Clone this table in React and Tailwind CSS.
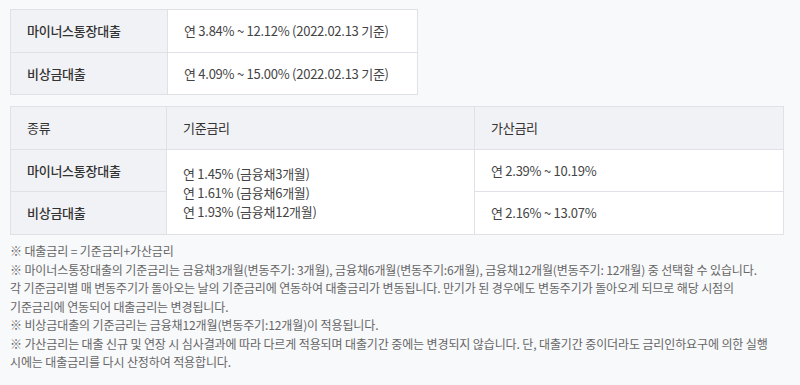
import React from "react";

const font = { fontFamily: '"Noto Sans CJK KR", "Noto Sans", sans-serif' };

export default function App() {
  const th = "border border-[#dfe1e6] bg-[#f1f2f5] px-4 text-left font-medium text-[#333]";
  const td = "border border-[#dfe1e6] bg-white px-4 text-left text-[#444]";
  return (
    <div
      className="min-h-[385px] w-[800px] bg-[#f8f9fb] px-[10px] pt-[9px] text-[13px] tracking-[-0.02em]"
      style={font}
    >
      <table className="w-[408px] border-collapse">
        <tbody>
          <tr className="h-[43px]">
            <th className={`${th} w-[157px]`}>마이너스통장대출</th>
            <td className={td}>연 3.84% ~ 12.12% (2022.02.13 기준)</td>
          </tr>
          <tr className="h-[42px]">
            <th className={th}>비상금대출</th>
            <td className={td}>연 4.09% ~ 15.00% (2022.02.13 기준)</td>
          </tr>
        </tbody>
      </table>

      <table className="mt-[11px] w-[774px] border-collapse">
        <thead>
          <tr className="h-[43px]">
            <th className={`${th} w-[156px] font-normal`}>종류</th>
            <th className={`${th} w-[308px] font-normal`}>기준금리</th>
            <th className={`${th} font-normal`}>가산금리</th>
          </tr>
        </thead>
        <tbody>
          <tr className="h-[42px]">
            <th className={th}>마이너스통장대출</th>
            <td className={`${td} leading-[19px]`} rowSpan={2}>
              <div>연 1.45% (금융채3개월)</div>
              <div>연 1.61% (금융채6개월)</div>
              <div>연 1.93% (금융채12개월)</div>
            </td>
            <td className={td}>연 2.39% ~ 10.19%</td>
          </tr>
          <tr className="h-[43px]">
            <th className={th}>비상금대출</th>
            <td className={td}>연 2.16% ~ 13.07%</td>
          </tr>
        </tbody>
      </table>

      <div className="mt-[7px] text-[12px] leading-[18.5px] tracking-[-0.01em] text-[#666]">
        <p>※ 대출금리 = 기준금리+가산금리</p>
        <p>
          ※ 마이너스통장대출의 기준금리는 금융채3개월(변동주기: 3개월), 금융채6개월(변동주기:6개월), 금융채12개월(변동주기: 12개월) 중 선택할 수 있습니다.
          <br />
          각 기준금리별 매 변동주기가 돌아오는 날의 기준금리에 연동하여 대출금리가 변동됩니다. 만기가 된 경우에도 변동주기가 돌아오게 되므로 해당 시점의
          <br />
          기준금리에 연동되어 대출금리는 변경됩니다.
        </p>
        <p>※ 비상금대출의 기준금리는 금융채12개월(변동주기:12개월)이 적용됩니다.</p>
        <p>
          ※ 가산금리는 대출 신규 및 연장 시 심사결과에 따라 다르게 적용되며 대출기간 중에는 변경되지 않습니다. 단, 대출기간 중이더라도 금리인하요구에 의한 실행
          <br />
          시에는 대출금리를 다시 산정하여 적용합니다.
        </p>
      </div>
    </div>
  );
}
